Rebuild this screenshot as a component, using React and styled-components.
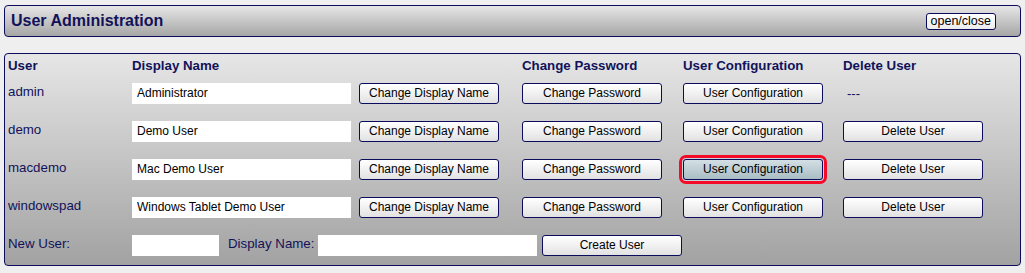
import { createGlobalStyle, styled } from "styled-components";

const Global = createGlobalStyle`
  html, body {
    margin: 0;
    padding: 0;
    background: #efefef;
    font-family: "Liberation Sans", Arial, sans-serif;
  }
  body {
    padding: 5px 4px 0 4px;
  }
`;

const Panel = styled.div`
  border: 1px solid #0c0c5c;
  border-radius: 4px;
  background: linear-gradient(to bottom, #e6e6e6, ${(p) => p.bottom || "#a6a6a6"});
  box-sizing: border-box;
`;

const HeaderPanel = styled(Panel)`
  height: 32px;
  display: flex;
  align-items: center;
  justify-content: space-between;
  padding: 0 24px 0 6px;
`;

const Title = styled.h2`
  margin: 0;
  font-size: 16px;
  font-weight: bold;
  color: #12125a;
`;

const SmallButton = styled.button`
  font-family: inherit;
  font-size: 12.5px;
  color: #000;
  height: 17px;
  padding: 0 4px;
  border: 1px solid #0c0c5c;
  border-radius: 3px;
  background: linear-gradient(to bottom, #ffffff, #ececec);
  line-height: 13px;
`;

const UsersPanel = styled(Panel)`
  margin-top: 16px;
  height: 213px;
  padding: 0 0 0 3px;
`;

const Grid = styled.div`
  display: grid;
  grid-template-columns: 124px 227px 163px 161px 160px 1fr;
  grid-template-rows: 20px repeat(4, 38px);
  align-items: center;
`;

const Head = styled.div`
  font-size: 13.3px;
  font-weight: bold;
  color: #12125a;
  align-self: end;
  margin-bottom: 1px;
`;

const Name = styled.div`
  font-size: 13.3px;
  color: #12125a;
  margin-top: -3px;
`;

const TextInput = styled.input`
  box-sizing: border-box;
  width: ${(p) => p.w || 219}px;
  height: 21px;
  border: none;
  outline: none;
  background: #fff;
  font-family: inherit;
  font-size: 12px;
  color: #000;
  padding: 0 5px;
`;

const Button = styled.button`
  box-sizing: border-box;
  width: 140px;
  height: 21px;
  font-family: inherit;
  font-size: 12px;
  color: #000;
  border: 1px solid #0c0c5c;
  border-radius: 3px;
  background: ${(p) =>
    p.active
      ? "linear-gradient(to bottom, #d3dfe4, #aabdc4)"
      : "linear-gradient(to bottom, #ffffff, #e2e2e2)"};
  box-shadow: ${(p) => (p.active ? "0 0 0 1px #c8d4da, 0 0 0 4px #f50a28" : "none")};
  padding: 0;
`;

const Dash = styled.div`
  font-size: 13px;
  color: #12125a;
  padding-left: 4px;
`;

const NewRow = styled.div`
  display: flex;
  align-items: center;
  height: 38px;
`;

const Label = styled.span`
  font-size: 13.3px;
  color: #12125a;
  width: ${(p) => p.w}px;
  margin-left: ${(p) => p.ml || 0}px;
  margin-top: -3px;
`;

const users = [
  { login: "admin", display: "Administrator", canDelete: false },
  { login: "demo", display: "Demo User", canDelete: true },
  { login: "macdemo", display: "Mac Demo User", canDelete: true, active: true },
  { login: "windowspad", display: "Windows Tablet Demo User", canDelete: true },
];

export default function App() {
  return (
    <>
      <Global />
      <HeaderPanel>
        <Title>User Administration</Title>
        <SmallButton>open/close</SmallButton>
      </HeaderPanel>
      <UsersPanel bottom="#a2a2a2">
        <Grid>
          <Head>User</Head>
          <Head>Display Name</Head>
          <Head />
          <Head>Change Password</Head>
          <Head>User Configuration</Head>
          <Head>Delete User</Head>
          {users.map((u) => (
            <>
              <Name key={u.login + "n"}>{u.login}</Name>
              <div key={u.login + "i"}>
                <TextInput defaultValue={u.display} />
              </div>
              <div key={u.login + "b"}>
                <Button>Change Display Name</Button>
              </div>
              <div key={u.login + "p"}>
                <Button>Change Password</Button>
              </div>
              <div key={u.login + "c"}>
                <Button active={u.active}>User Configuration</Button>
              </div>
              <div key={u.login + "d"}>
                {u.canDelete ? <Button>Delete User</Button> : <Dash>---</Dash>}
              </div>
            </>
          ))}
        </Grid>
        <NewRow>
          <Label w={124}>New User:</Label>
          <TextInput w={87} />
          <Label w={90} ml={9}>Display Name:</Label>
          <TextInput w={219} />
          <Button style={{ marginLeft: 5 }}>Create User</Button>
        </NewRow>
      </UsersPanel>
    </>
  );
}
